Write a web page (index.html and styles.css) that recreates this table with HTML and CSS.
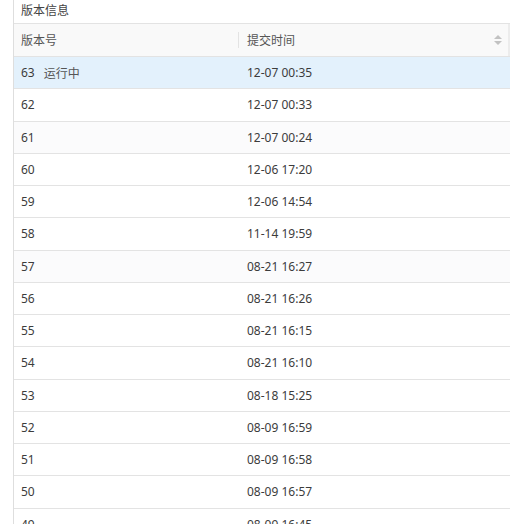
FILE: index.html
```html
<!DOCTYPE html>
<html lang="zh">
<head>
<meta charset="utf-8">
<link rel="stylesheet" href="styles.css">
</head>
<body>
<div class="panel">
  <div class="title">版本信息</div>
  <div class="table">
    <div class="row head">
      <div class="cell c1">版本号</div>
      <div class="cell c2">提交时间
        <span class="sort"><span class="up"></span><span class="down"></span></span>
      </div>
    </div>
    <div class="row active"><div class="cell c1">63<span class="tag">运行中</span></div><div class="cell c2">12-07 00:35</div></div>
    <div class="row"><div class="cell c1">62</div><div class="cell c2">12-07 00:33</div></div>
    <div class="row tint"><div class="cell c1">61</div><div class="cell c2">12-07 00:24</div></div>
    <div class="row"><div class="cell c1">60</div><div class="cell c2">12-06 17:20</div></div>
    <div class="row"><div class="cell c1">59</div><div class="cell c2">12-06 14:54</div></div>
    <div class="row"><div class="cell c1">58</div><div class="cell c2">11-14 19:59</div></div>
    <div class="row tint"><div class="cell c1">57</div><div class="cell c2">08-21 16:27</div></div>
    <div class="row"><div class="cell c1">56</div><div class="cell c2">08-21 16:26</div></div>
    <div class="row"><div class="cell c1">55</div><div class="cell c2">08-21 16:15</div></div>
    <div class="row"><div class="cell c1">54</div><div class="cell c2">08-21 16:10</div></div>
    <div class="row"><div class="cell c1">53</div><div class="cell c2">08-18 15:25</div></div>
    <div class="row"><div class="cell c1">52</div><div class="cell c2">08-09 16:59</div></div>
    <div class="row"><div class="cell c1">51</div><div class="cell c2">08-09 16:58</div></div>
    <div class="row"><div class="cell c1">50</div><div class="cell c2">08-09 16:57</div></div>
    <div class="row"><div class="cell c1">49</div><div class="cell c2">08-09 16:45</div></div>
  </div>
</div>
</body>
</html>
```
FILE: styles.css
```css
html, body {
  margin: 0;
  padding: 0;
  background: #fff;
  overflow: hidden;
  height: 524px;
}
body {
  font-family: "Noto Sans", "Noto Sans CJK SC", sans-serif;
  font-size: 12px;
  color: #3c3c3c;
}
.panel {
  margin-left: 13px;
  border-left: 1px solid #dedede;
  min-height: 524px;
}
.title {
  height: 23px;
  line-height: 21px;
  padding-left: 7px;
  color: #444;
  box-sizing: border-box;
}
.table {
  border-top: 1px solid #e3e3e3;
}
.row {
  display: flex;
  height: 32.25px;
  box-sizing: border-box;
  border-bottom: 1px solid #e3e3e3;
  align-items: center;
}
.row.head {
  height: 33px;
  background: #f9f9f9;
  color: #555;
  position: relative;
}
.row.head::after {
  content: "";
  position: absolute;
  right: 0;
  top: 0;
  bottom: 0;
  width: 2px;
  background: #ececec;
}
.row.active {
  background: #e3f1fc;
}
.row.tint {
  background: #fbfbfc;
}
.cell {
  box-sizing: border-box;
  padding-left: 7px;
  display: flex;
  align-items: center;
  height: 100%;
}
.c1 {
  width: 224px;
}
.c2 {
  flex: 1;
  padding-left: 9px;
  position: relative;
}
.head .c2::before {
  content: "";
  position: absolute;
  left: 0;
  top: 8px;
  height: 16px;
  width: 1px;
  background: #e3e3e3;
}
.tag {
  margin-left: 9px;
  color: #555;
}
.sort {
  position: absolute;
  right: 8px;
  top: 11px;
  display: flex;
  flex-direction: column;
  gap: 2px;
}
.up, .down {
  width: 0;
  height: 0;
  border-left: 4px solid transparent;
  border-right: 4px solid transparent;
}
.up {
  border-bottom: 4px solid #c2c2c2;
}
.down {
  border-top: 4px solid #c2c2c2;
}
```
